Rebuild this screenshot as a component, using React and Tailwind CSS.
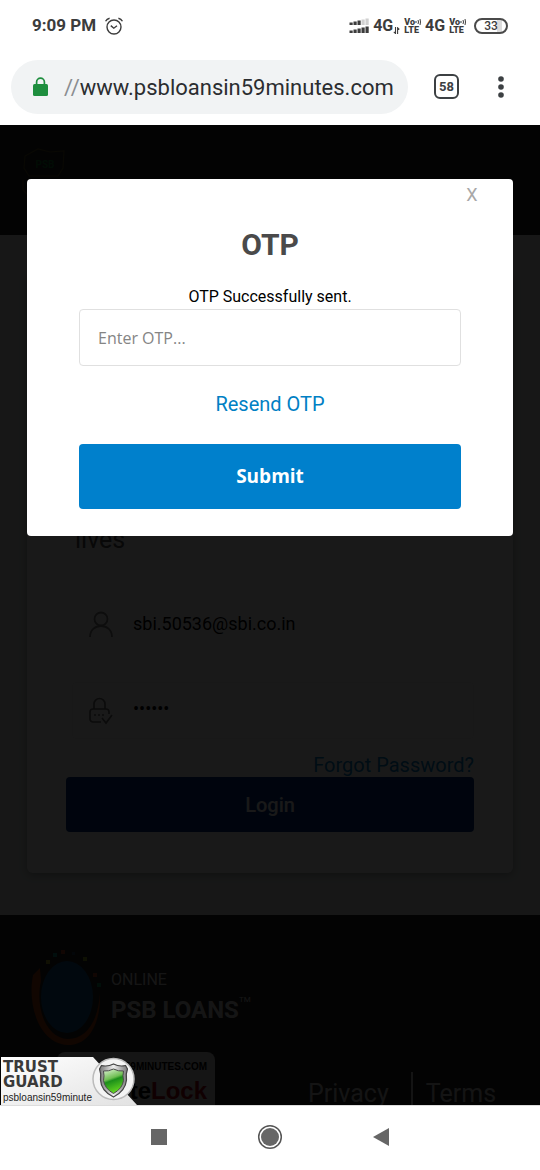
const roboto = "font-['Roboto',sans-serif]";

function AlarmIcon() {
  return (
    <svg className="h-5 w-5" viewBox="0 0 20 20" fill="none" stroke="#3c3c3c" strokeWidth="1.4" aria-hidden="true">
      <circle cx="10" cy="11" r="7" />
      <path d="M6.8 9.6 9.8 12.2 13 9.8" />
      <path d="M1.6 5.2C2.4 3.6 3.8 2.6 5.6 2.2M18.4 5.2C17.6 3.6 16.2 2.6 14.4 2.2" />
    </svg>
  );
}

function SignalIcon() {
  const xs = [0, 4, 8, 12, 16];
  const top = [3, 4, 5, 6, 7];
  return (
    <svg className="h-4 w-5" viewBox="0 0 20 16" aria-hidden="true">
      {xs.map((x, i) => (
        <g key={x}>
          <rect x={x + 0.5} y={7.5 - top[i]} width="3.2" height={top[i] - 0.5} fill={i < 3 ? "#3c3c3c" : "#d0d0d0"} />
          <rect x={x + 0.5} y={15.5 - top[i]} width="3.2" height={top[i] - 0.5} fill="#3c3c3c" />
        </g>
      ))}
    </svg>
  );
}

function VoLte() {
  return (
    <span className="flex flex-col text-[9px] leading-[8px] font-black">
      <span className="flex items-center">
        Vo
        <svg className="h-2 w-[6px]" viewBox="0 0 6 8" fill="none" stroke="#3c3c3c" strokeWidth="1" aria-hidden="true">
          <path d="M1 3v2M3 2q1 2 0 4M5 1q1 3 0 6" />
        </svg>
      </span>
      <span>LTE</span>
    </span>
  );
}

function StatusBar() {
  return (
    <div className="flex h-[50px] items-center justify-between px-8 pt-px text-[#3c3c3c]">
      <div className="flex items-center gap-2">
        <span className="text-[17px] font-bold">9:09 PM</span>
        <AlarmIcon />
      </div>
      <div className="flex items-center gap-1 text-[16px] font-bold">
        <SignalIcon />
        <span className="flex items-end">
          4G
          <svg className="mb-1 h-[7px] w-[7px]" viewBox="0 0 7 7" fill="none" stroke="#3c3c3c" strokeWidth="1.1" aria-hidden="true">
            <path d="M2.5 0v6.5L.8 4.8M4.6 7V.8l1.7 1.7" />
          </svg>
        </span>
        <VoLte />
        <span>4G</span>
        <VoLte />
        <span className="ml-1 flex h-4 w-[34px] items-center justify-center rounded-full border-2 border-[#4a4a4a] bg-[linear-gradient(90deg,#fff_70%,#dcdcdc_70%,#dcdcdc_88%,#fff_88%)] text-[12px] leading-3 font-medium">
          33
        </span>
      </div>
    </div>
  );
}

function BrowserBar() {
  return (
    <div className="flex h-[75px] items-center pr-8 pb-0.5 pl-[11px]">
      <div className="flex h-[54px] min-w-0 flex-1 items-center gap-4 rounded-full bg-[#f1f3f4] pt-px pl-[22px]">
        <svg className="h-5 w-[15px] shrink-0" viewBox="0 0 15 20" aria-hidden="true">
          <path d="M3.6 8V5a3.9 3.9 0 0 1 7.8 0v3" fill="none" stroke="#1e8e3e" strokeWidth="1.7" />
          <rect x="0" y="7" width="15" height="12" rx="1.5" fill="#1e8e3e" />
        </svg>
        <span className="text-[22px] whitespace-nowrap text-[#2b2d30]">
          <span className="text-[#8a8d91]">//</span>www.psbloansin59minutes.com
        </span>
      </div>
      <button className="ml-[26px] flex h-[25px] w-[25px] items-center justify-center rounded-md border-2 border-[#3c4043] text-[13px] font-bold text-[#3c4043]" aria-label="58 open tabs">
        58
      </button>
      <button className="ml-[35px]" aria-label="More options">
        <svg className="h-6 w-[14px]" viewBox="0 0 14 24" fill="#3c4043" aria-hidden="true">
          <circle cx="7" cy="4" r="2.8" />
          <circle cx="7" cy="12" r="2.8" />
          <circle cx="7" cy="20" r="2.8" />
        </svg>
      </button>
    </div>
  );
}

function HeaderLogo() {
  return (
    <svg className="h-16 w-12" viewBox="0 0 48 64" fill="none" strokeWidth="1.2" aria-hidden="true">
      <path d="M5 14 18 7l12 3 14-1-1 17-5 8H9L4 26z" stroke="#5a5020" />
      <text x="25" y="26" textAnchor="middle" fontSize="10" fontWeight="700" fill="#107830">PSB</text>
      <path d="M3 38v10l6 6" stroke="#604020" />
    </svg>
  );
}

function LoginForm() {
  return (
    <div className="flex-1 rounded-md bg-white px-[39px] pt-[250px] pb-[41px] shadow-[0_2px_8px_rgba(0,0,0,0.3)]">
      <p className="pl-[9px] text-[25px] leading-8 text-[#505050]">lives</p>
      <div className="mt-10 ml-[6px] flex h-[58px] items-center gap-5 rounded border border-[#f8f8f8] pl-4">
        <svg className="h-7 w-6 shrink-0" viewBox="0 0 24 28" fill="none" stroke="#808080" strokeWidth="1.8" aria-hidden="true">
          <circle cx="12" cy="8" r="6.5" />
          <path d="M1 26C1 19 6 15 12 15s11 4 11 11" />
        </svg>
        <input className="w-full min-w-0 pb-1 text-[18px] text-black outline-none" aria-label="Email" defaultValue="sbi.50536@sbi.co.in" />
      </div>
      <div className="mt-[28px] ml-[6px] flex h-[57px] items-center gap-5 rounded border border-[#f0f0f0] pl-4">
        <svg className="h-7 w-6 shrink-0" viewBox="0 0 24 28" fill="none" stroke="#707070" strokeWidth="1.7" aria-hidden="true">
          <path d="M5 12V7a5 5 0 0 1 11 0v5M12 25H4a3 3 0 0 1-3-3v-7a3 3 0 0 1 3-3h13a3 3 0 0 1 3 3v2M13 21l4 5 6-8" />
          <path d="M5 18h2M9 18h2M13 18h2" />
        </svg>
        <input type="password" className="w-full min-w-0 pb-1 text-[18px] text-black outline-none" aria-label="Password" defaultValue="123456" />
      </div>
      <div className="flex h-[38px] items-end justify-end">
        <a href="#forgot" className="text-[20px] leading-6 text-[#0080cc]">Forgot Password?</a>
      </div>
      <button className="h-[55px] w-full rounded bg-[#003080] text-[20px] font-medium text-white">Login</button>
    </div>
  );
}

function FooterLogo() {
  return (
    <div className="flex items-start gap-2">
      <svg className="h-[98px] w-[72px] shrink-0" viewBox="0 0 72 98" aria-hidden="true">
        <ellipse cx="36" cy="49" rx="26" ry="36" fill="#0e5590" />
        <path d="M9 20 2 27C-4 57 8 95 36 97 60 98 70 72 69 45 67 74 55 91 37 91 15 90 4 60 10 33z" fill="#a83c10" />
        <g>
          <rect x="15" y="12" width="4" height="4" fill="#a0a020" />
          <rect x="22" y="5" width="4" height="4" fill="#109080" />
          <rect x="30" y="2" width="4" height="4" fill="#b04020" />
          <rect x="41" y="4" width="3" height="3" fill="#204060" />
          <rect x="52" y="9" width="4" height="4" fill="#90a020" />
          <rect x="62" y="25" width="4" height="4" fill="#b04020" />
          <rect x="66" y="35" width="4" height="4" fill="#109060" />
        </g>
      </svg>
      <div className="pt-5 text-[#d8d8d8]">
        <p className="text-[16px] leading-6">ONLINE</p>
        <p className="flex items-start text-[24px] leading-9 font-bold">
          PSB LOANS<span className="text-[8px] leading-4 font-normal">TM</span>
        </p>
      </div>
    </div>
  );
}

function Footer() {
  return (
    <footer className="h-[190px] bg-[#202020] pt-[33px] pl-[31px]">
      <FooterLogo />
      <div className="flex items-start">
        <div className="mt-[6px] ml-[26px] h-20 w-[158px] shrink-0 rounded-lg bg-[#d0d0d0] pt-[9px] pr-2 text-right font-['Liberation_Sans',sans-serif] font-bold text-black">
          <p className="text-[10px] leading-3">59MINUTES.COM</p>
          <p className="text-[24px] leading-9">Site<span className="text-[#a00010]">Lock</span></p>
        </div>
        <nav className="mt-[26px] ml-[93px] flex items-center text-[25px] leading-[44px] text-[#c8c8c8]">
          <a href="#privacy" className="border-r-2 border-[#c8c8c8] pr-[22px]">Privacy</a>
          <a href="#terms" className="pl-[13px]">Terms</a>
        </nav>
      </div>
    </footer>
  );
}

function TrustGuard() {
  return (
    <div className="absolute bottom-0 left-0 h-12 w-[137px]">
      <svg className="absolute inset-0 h-full w-full" viewBox="0 0 137 48" aria-hidden="true">
        <defs>
          <linearGradient id="panel" x1="0" y1="0" x2="1" y2="1">
            <stop offset="0" stopColor="#fff" />
            <stop offset="1" stopColor="#e2e2e2" />
          </linearGradient>
          <linearGradient id="steel" x1="0" y1="0" x2="1" y2="0">
            <stop offset="0" stopColor="#777" />
            <stop offset=".5" stopColor="#eee" />
            <stop offset="1" stopColor="#777" />
          </linearGradient>
          <linearGradient id="green" x1="0" y1="0" x2=".3" y2="1">
            <stop offset="0" stopColor="#e4f4dc" />
            <stop offset=".45" stopColor="#6fbf52" />
            <stop offset=".55" stopColor="#1c8f1a" />
            <stop offset="1" stopColor="#5fd020" />
          </linearGradient>
        </defs>
        <path d="M1 0H93L137 48H1z" fill="url(#panel)" />
        <circle cx="113.5" cy="22" r="20.5" fill="#f4f4f4" stroke="#bbb" strokeWidth="1.5" />
        <path d="M113.5 7q6 3 12 1.5L127.500 12q-2 5-1 11-1 11-13 17Q101 34 100.500 23q1-6-1-11l2-3.500Q107.500 10 113.500 7z" fill="url(#steel)" stroke="#444" strokeWidth="1.2" />
        <path d="M113.5 12q5 2.500 10 2-1 5 0 9.500-1 8-10 13Q104.500 31.500 103.500 23.500q1-4.500 0-9.500 5 .5 10-2z" fill="url(#green)" stroke="#4a4a4a" />
      </svg>
      <div className="relative flex flex-col pt-[3px] pl-[3px] text-[#3a3a3a]">
        <span className="font-['DejaVu_Sans',sans-serif] text-[15px] leading-[15px] font-bold">TRUST</span>
        <span className="font-['DejaVu_Sans',sans-serif] text-[15px] leading-[15px] font-bold">GUARD</span>
        <span className="font-['Liberation_Sans',sans-serif] text-[10px] leading-[15px] whitespace-nowrap text-[#222]">psbloansin59minute</span>
      </div>
    </div>
  );
}

function OtpDialog() {
  return (
    <div className="absolute inset-0 bg-black/90 px-[27px] pt-[54px]">
      <form role="dialog" aria-label="OTP" onSubmit={(e) => e.preventDefault()} className="flex flex-col rounded bg-white px-[52px] pb-[27px]">
        <button type="button" aria-label="Close" className="mr-[-17px] h-8 w-3 self-end text-[18px] leading-8 text-[#a8a8a8]">X</button>
        <h1 className="mt-4 text-center text-[30px] leading-9 font-bold text-[#4a4a4a]">OTP</h1>
        <label htmlFor="otp" className="mt-[22px] text-center text-[16px] leading-6 text-black">OTP Successfully sent.</label>
        <input id="otp" placeholder="Enter OTP..." className="h-[57px] rounded border border-[#e0e0e0] px-[18px] font-['Open_Sans',sans-serif] text-[16px] outline-none placeholder:text-[#858585]" />
        <a href="#resend" className="mt-6 self-center text-[20px] leading-7 text-[#0080c4]">Resend OTP</a>
        <button type="submit" className="mt-[26px] h-[65px] rounded bg-[#0080cc] font-['Open_Sans',sans-serif] text-[19px] font-bold text-white">Submit</button>
      </form>
    </div>
  );
}

function NavBar() {
  return (
    <nav className="flex h-[65px] shrink-0 items-center justify-center gap-[86px] border-t border-[#ddd] bg-white pb-0.5">
      <button aria-label="Recent apps" className="flex w-6 justify-center"><span className="h-4 w-4 bg-[#666]" /></button>
      <button aria-label="Home" className="flex w-[26px] justify-center">
        <svg className="h-[26px] w-[26px]" viewBox="0 0 26 26" aria-hidden="true">
          <circle cx="13" cy="13" r="11.3" fill="none" stroke="#555" strokeWidth="1.5" />
          <circle cx="13" cy="13" r="9" fill="#666" />
        </svg>
      </button>
      <button aria-label="Back" className="flex w-6 justify-center">
        <svg className="h-[18px] w-4" viewBox="0 0 16 18" fill="#666" aria-hidden="true"><path d="M0 9 16 0v18z" /></svg>
      </button>
    </nav>
  );
}

export default function App() {
  return (
    <div className={`flex h-screen flex-col bg-white ${roboto}`}>
      <StatusBar />
      <BrowserBar />
      <div className="relative flex min-h-0 flex-1 flex-col overflow-hidden">
        <header className="h-[110px] shrink-0 bg-[#202020] pt-[17px] pl-5"><HeaderLogo /></header>
        <main className="flex flex-1 flex-col bg-[#e4eae8] px-[27px] pt-[39px] pb-[42px]"><LoginForm /></main>
        <Footer />
        <OtpDialog />
        <TrustGuard />
      </div>
      <NavBar />
    </div>
  );
}
